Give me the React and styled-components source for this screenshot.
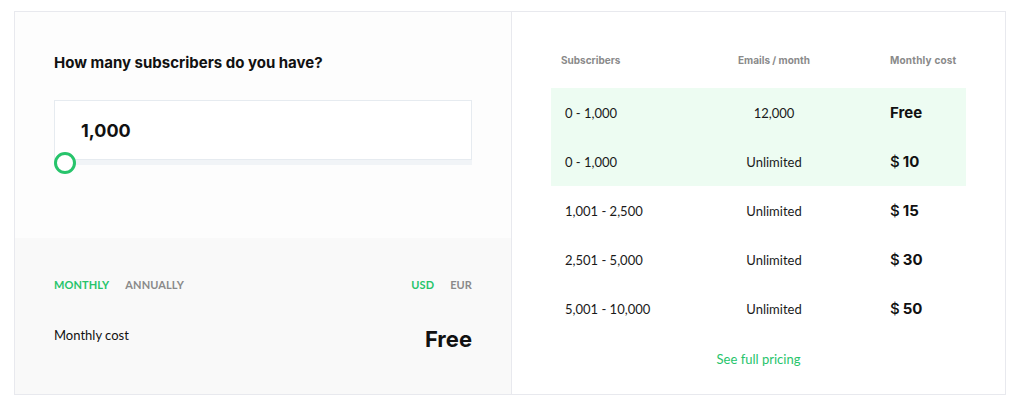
import React from 'react';
import styled, { createGlobalStyle } from 'styled-components';

const GREEN = '#27c46b';
const BOLD_FONT = 'Inter, Lato, "Noto Sans", sans-serif';

const rows = [
  { range: '0 - 1,000', emails: '12,000', cost: 'Free', active: true },
  { range: '0 - 1,000', emails: 'Unlimited', cost: '10', active: true },
  { range: '1,001 - 2,500', emails: 'Unlimited', cost: '15' },
  { range: '2,501 - 5,000', emails: 'Unlimited', cost: '30' },
  { range: '5,001 - 10,000', emails: 'Unlimited', cost: '50' },
];

function App() {
  return (
    <>
      <GlobalStyle />
      <Card>
        <LeftPanel>
          <SliderSection>
            <Question>How many subscribers do you have?</Question>
            <InputBox>
              <Value>1,000</Value>
              <Track>
                <Thumb />
              </Track>
            </InputBox>
          </SliderSection>
          <CostSection>
            <ToggleRow>
              <Toggles>
                <Toggle active>MONTHLY</Toggle>
                <Toggle>ANNUALLY</Toggle>
              </Toggles>
              <Toggles>
                <Toggle active>USD</Toggle>
                <Toggle>EUR</Toggle>
              </Toggles>
            </ToggleRow>
            <CostRow>
              <CostLabel>Monthly cost</CostLabel>
              <CostValue>Free</CostValue>
            </CostRow>
          </CostSection>
        </LeftPanel>
        <RightPanel>
          <Table>
            <HeadRow>
              <HeadCell>Subscribers</HeadCell>
              <HeadCell center>Emails / month</HeadCell>
              <HeadCell price>Monthly cost</HeadCell>
            </HeadRow>
            {rows.map((r, i) => (
              <Row key={i} active={r.active}>
                <Cell>{r.range}</Cell>
                <Cell center>{r.emails}</Cell>
                <Price>
                  {r.cost === 'Free' ? r.cost : (
                    <>
                      <Dollar>$</Dollar>
                      {r.cost}
                    </>
                  )}
                </Price>
              </Row>
            ))}
          </Table>
          <FullPricing>See full pricing</FullPricing>
        </RightPanel>
      </Card>
    </>
  );
}

const GlobalStyle = createGlobalStyle`
  body {
    margin: 0;
    background: #ffffff;
    font-family: Lato, "Noto Sans", sans-serif;
    color: #111;
  }
`;

const Card = styled.div`
  display: flex;
  width: 992px;
  height: 384px;
  margin: 11px 0 0 14px;
  border: 1px solid #e8e9ee;
  box-sizing: border-box;
`;

const LeftPanel = styled.div`
  width: 496px;
  display: flex;
  flex-direction: column;
  border-right: 1px solid #e8e9ee;
`;

const SliderSection = styled.div`
  height: 226px;
  background: #fdfdfd;
  padding: 41px 39px 0 39px;
  box-sizing: border-box;
`;

const Question = styled.h2`
  margin: 0;
  font-family: ${BOLD_FONT};
  font-size: 15px;
  font-weight: 700;
  line-height: 20px;
  color: #111;
`;

const InputBox = styled.div`
  position: relative;
  margin-top: 27px;
  height: 60px;
  box-sizing: border-box;
  border: 1px solid #e6ebf0;
  background: #fff;
  display: flex;
  align-items: center;
  padding-left: 26px;
`;

const Value = styled.span`
  font-family: ${BOLD_FONT};
  font-size: 18px;
  font-weight: 700;
  color: #111;
`;

const Track = styled.div`
  position: absolute;
  left: -1px;
  right: -1px;
  bottom: -6px;
  height: 5px;
  background: #f1f4f7;
`;

const Thumb = styled.div`
  position: absolute;
  left: 0;
  top: -8px;
  width: 16px;
  height: 16px;
  border-radius: 50%;
  border: 3px solid ${GREEN};
  background: #fff;
`;

const CostSection = styled.div`
  flex: 1;
  background: #f9f9f9;
  padding: 40px 39px 0 39px;
`;

const ToggleRow = styled.div`
  display: flex;
  justify-content: space-between;
  align-items: center;
`;

const Toggles = styled.div`
  display: flex;
  gap: 16px;
`;

const Toggle = styled.span`
  font-size: 11px;
  font-weight: 700;
  color: ${p => (p.active ? GREEN : '#8a8a8a')};
  letter-spacing: 0.1px;
`;

const CostRow = styled.div`
  display: flex;
  justify-content: space-between;
  align-items: center;
  margin-top: 35px;
`;

const CostLabel = styled.span`
  font-size: 13px;
  color: #111;
  margin-top: -8px;
`;

const CostValue = styled.span`
  font-family: ${BOLD_FONT};
  font-size: 22px;
  font-weight: 700;
  color: #111;
`;

const RightPanel = styled.div`
  flex: 1;
  background: #fff;
  padding: 40px 39px 0 39px;
  display: flex;
  flex-direction: column;
`;

const Table = styled.div`
  display: flex;
  flex-direction: column;
`;

const columns = `grid-template-columns: 150px 146px 1fr;`;

const HeadRow = styled.div`
  display: grid;
  ${columns}
  height: 36px;
  align-items: start;
`;

const HeadCell = styled.span`
  font-family: ${BOLD_FONT};
  font-size: 10px;
  line-height: 16px;
  font-weight: 700;
  color: #8a8a8a;
  letter-spacing: ${p => (p.price ? '0.2px' : '0')};
  padding-left: ${p => (p.price ? '43px' : p.center ? '0' : '10px')};
  text-align: ${p => (p.center ? 'center' : 'left')};
`;

const Row = styled.div`
  display: grid;
  ${columns}
  height: 49px;
  align-items: center;
  background: ${p => (p.active ? '#edfcf2' : 'transparent')};
`;

const Cell = styled.span`
  font-size: 13px;
  color: #1a1a1a;
  padding-left: ${p => (p.center ? '0' : '14px')};
  text-align: ${p => (p.center ? 'center' : 'left')};
`;

const Price = styled.span`
  font-family: ${BOLD_FONT};
  font-size: 15px;
  font-weight: 700;
  color: #111;
  padding-left: 43px;
`;

const Dollar = styled.span`
  font-weight: 500;
  margin-right: 3px;
`;

const FullPricing = styled.a`
  align-self: center;
  margin-top: 18px;
  font-size: 13px;
  color: ${GREEN};
  cursor: pointer;
`;

export default App;
